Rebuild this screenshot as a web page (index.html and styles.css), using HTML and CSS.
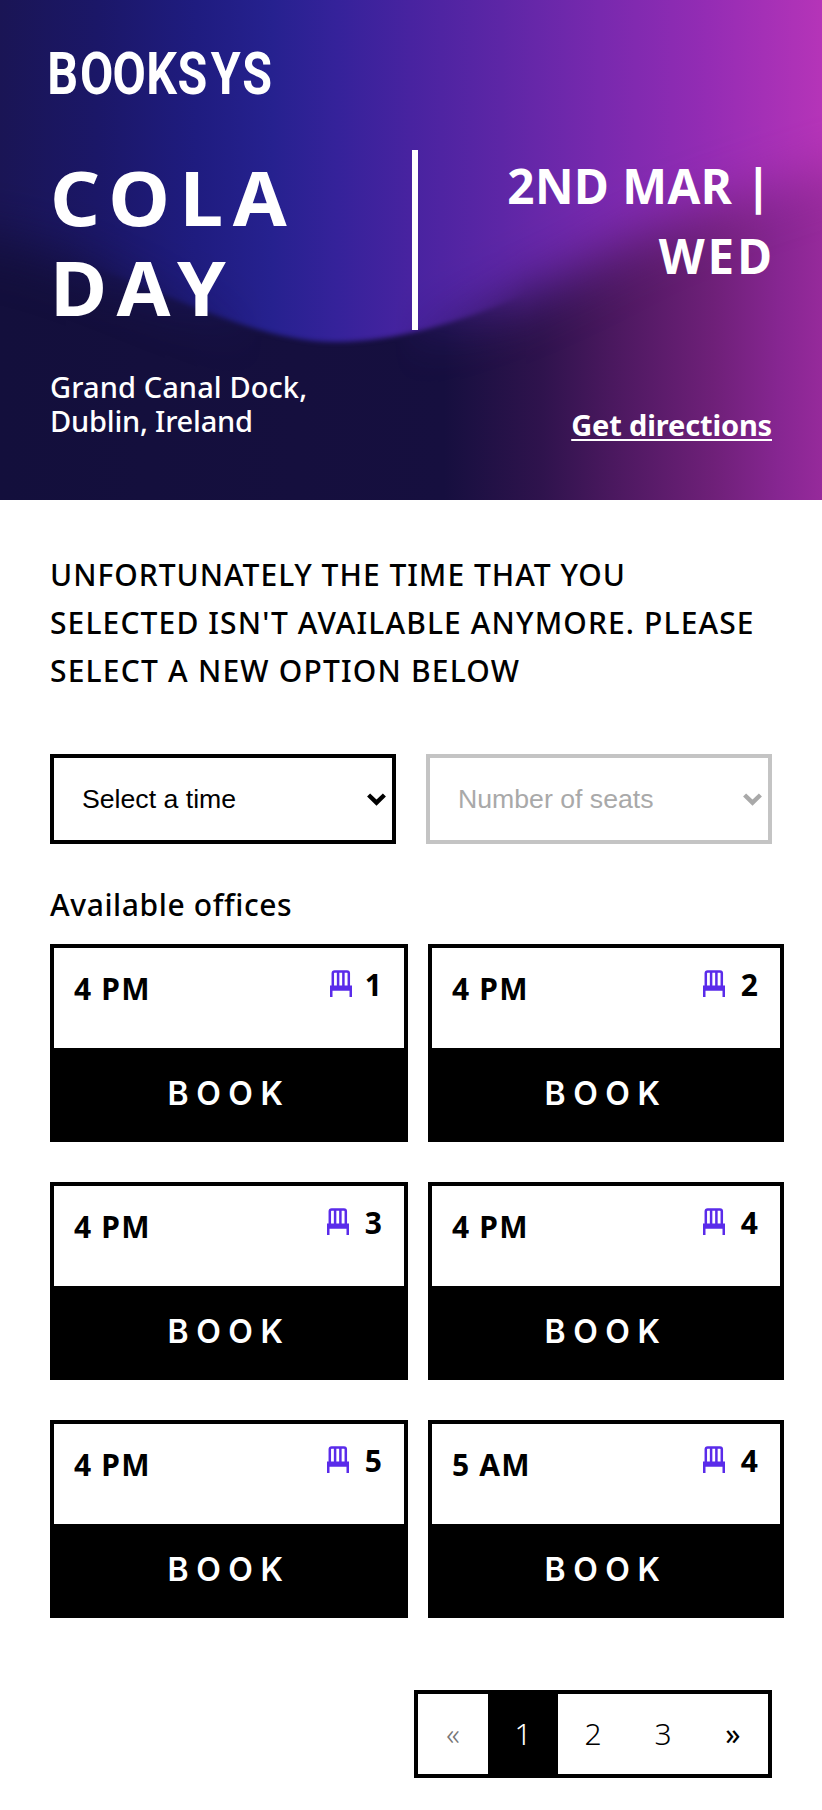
FILE: index.html
```html
<!DOCTYPE html>
<html lang="en">
<head>
<meta charset="utf-8">
<title>Booksys</title>
<link rel="stylesheet" href="styles.css">
</head>
<body>
<svg class="defs" aria-hidden="true">
  <symbol id="chair" viewBox="0 0 22 27">
    <path d="M2.8 17V3.2Q2.8 1.4 4.6 1.4H17Q18.8 1.4 18.8 3.2V17M8.1 2V17M13.4 2V17" fill="none" stroke="#5a2bea" stroke-width="2.5"/>
    <path d="M0 15.6H22V27H19.5V20.8H2.5V27H0Z" fill="#5a2bea"/>
  </symbol>
</svg>
<header class="hero">
  <svg class="hero-bg" viewBox="0 0 822 500" preserveAspectRatio="none" aria-hidden="true">
    <defs>
      <linearGradient id="top" x1="0" x2="1" y1="0" y2="0">
        <stop offset="0" stop-color="#1a1555"/>
        <stop offset=".12" stop-color="#1b1768"/>
        <stop offset=".24" stop-color="#1f1c80"/>
        <stop offset=".33" stop-color="#26218f"/>
        <stop offset=".41" stop-color="#35229a"/>
        <stop offset=".5" stop-color="#4823a0"/>
        <stop offset=".61" stop-color="#5d26a6"/>
        <stop offset=".73" stop-color="#7829ae"/>
        <stop offset=".86" stop-color="#942cb4"/>
        <stop offset="1" stop-color="#b534b8"/>
      </linearGradient>
      <linearGradient id="base" x1="0" x2="1" y1="0" y2="0">
        <stop offset="0" stop-color="#130f3c"/>
        <stop offset=".54" stop-color="#160f3f"/>
        <stop offset=".66" stop-color="#2f134d"/>
        <stop offset=".76" stop-color="#4f1962"/>
        <stop offset=".87" stop-color="#6f2079"/>
        <stop offset=".95" stop-color="#872692"/>
        <stop offset="1" stop-color="#962a9b"/>
      </linearGradient>
      <linearGradient id="focus" gradientUnits="userSpaceOnUse" x1="0" x2="822" y1="0" y2="0">
        <stop offset=".08" stop-color="#000"/>
        <stop offset=".32" stop-color="#fff"/>
        <stop offset=".48" stop-color="#fff"/>
        <stop offset=".64" stop-color="#000"/>
      </linearGradient>
      <filter id="soft" x="-20%" y="-20%" width="140%" height="140%"><feGaussianBlur stdDeviation="26"/></filter>
      <filter id="crisp"><feGaussianBlur stdDeviation="2.5"/></filter>
      <mask id="focusMask" maskUnits="userSpaceOnUse" x="0" y="0" width="822" height="500"><rect width="822" height="500" fill="url(#focus)"/></mask>
      <mask id="wave" maskUnits="userSpaceOnUse" x="0" y="0" width="822" height="500">
        <rect width="822" height="500" fill="#000"/>
        <path filter="url(#soft)" fill="#fff" d="M-100-100H940V135C800 180 700 207 620 248C540 292 430 342 336 342C236 342 125 265 0 240L-100 225Z"/>
        <g mask="url(#focusMask)">
          <rect width="822" height="500" fill="#000"/>
          <path filter="url(#crisp)" fill="#fff" d="M-100-100H940V135C800 180 700 207 620 248C540 292 430 342 336 342C236 342 125 265 0 240L-100 225Z"/>
        </g>
      </mask>
    </defs>
    <rect width="822" height="500" fill="url(#base)"/>
    <rect width="822" height="500" fill="url(#top)" mask="url(#wave)"/>
  </svg>
  <div class="hero-content">
    <svg class="logo" width="224" height="100" viewBox="0 0 224 100"><text transform="scale(.82 1)" x="-3.5 36.5 76.3 117.3 155.5 196 234.5" y="44">BOOKSYS</text></svg>
    <div class="event">
      <h1 class="title">COLA<br><span class="title-day">DAY</span></h1>
      <div class="divider"></div>
      <p class="date">2ND MAR |<br><span class="weekday">WED</span></p>
    </div>
    <div class="place">
      <p class="address">Grand Canal Dock,<br><span class="city">Dublin, Ireland</span></p>
      <a class="directions">Get directions</a>
    </div>
  </div>
</header>
<main class="content">
  <p class="notice"><span class="n1">UNFORTUNATELY THE TIME THAT YOU</span><br><span class="n2">SELECTED ISN'T AVAILABLE ANYMORE. PLEASE</span><br><span class="n3">SELECT A NEW OPTION BELOW</span></p>
  <div class="filters">
    <div class="select"><span>Select a time</span><svg width="19" height="13" viewBox="0 0 19 13"><path d="M1.6 2L9.5 9.6L17.4 2" fill="none" stroke="currentColor" stroke-width="4.4"/></svg></div>
    <div class="select disabled"><span>Number of seats</span><svg width="19" height="13" viewBox="0 0 19 13"><path d="M1.6 2L9.5 9.6L17.4 2" fill="none" stroke="currentColor" stroke-width="4.4"/></svg></div>
  </div>
  <h2 class="heading">Available offices</h2>
  <div class="offices">
    <article class="card"><div class="info"><span class="time">4 PM</span><span class="seats"><svg class="chair"><use href="#chair"/></svg><b class="one">1</b></span></div><div class="book">BOOK</div></article>
    <article class="card"><div class="info"><span class="time">4 PM</span><span class="seats"><svg class="chair"><use href="#chair"/></svg><b>2</b></span></div><div class="book">BOOK</div></article>
    <article class="card"><div class="info"><span class="time">4 PM</span><span class="seats"><svg class="chair"><use href="#chair"/></svg><b>3</b></span></div><div class="book">BOOK</div></article>
    <article class="card"><div class="info"><span class="time">4 PM</span><span class="seats"><svg class="chair"><use href="#chair"/></svg><b>4</b></span></div><div class="book">BOOK</div></article>
    <article class="card"><div class="info"><span class="time">4 PM</span><span class="seats"><svg class="chair"><use href="#chair"/></svg><b>5</b></span></div><div class="book">BOOK</div></article>
    <article class="card"><div class="info"><span class="time">5 AM</span><span class="seats"><svg class="chair"><use href="#chair"/></svg><b>4</b></span></div><div class="book">BOOK</div></article>
  </div>
  <nav class="pages"><span class="off">«</span><span class="current">1</span><span>2</span><span>3</span><span class="next">»</span></nav>
</main>
</body>
</html>
```
FILE: styles.css
```css
* { box-sizing: border-box; }
body { margin: 0; background: #fff; color: #000; font-family: "Noto Sans", sans-serif; }
h1, h2, p { margin: 0; }
.defs { display: none; }

.hero { position: relative; height: 500px; color: #fff; overflow: hidden; }
.hero-bg { position: absolute; inset: 0; width: 100%; height: 100%; }
.hero-content { position: relative; padding: 50px 50px 0; }
.logo { display: block; overflow: visible; }
.logo text { font: 700 59px Roboto, sans-serif; fill: #fff; }
.event { display: grid; grid-template-columns: 362px 6px 1fr; grid-template-rows: 180px; }
.title { padding-top: 2px; font-weight: 700; font-size: 75px; line-height: 90px; letter-spacing: 9.3px; white-space: nowrap; transform: scaleX(1.04); transform-origin: 0 0; }
.title-day { letter-spacing: 10.6px; }
.divider { background: #fff; }
.date { padding-top: 1px; text-align: right; font-size: 47.5px; line-height: 70px; font-weight: 700; letter-spacing: .5px; }
.weekday { margin-right: -3px; letter-spacing: 3px; }
.place { display: flex; justify-content: space-between; align-items: flex-end; height: 72px; margin-top: 40px; }
.address { align-self: flex-start; font-size: 29px; line-height: 34px; font-weight: 500; letter-spacing: .1px; }
.city { letter-spacing: -.2px; }
.directions { font-size: 29px; line-height: 34px; font-weight: 700; letter-spacing: -.15px; text-decoration: underline; text-decoration-thickness: 2px; text-underline-offset: 3px; }

.content { padding: 51px 50px 32px; }
.notice { height: 203px; font-size: 30px; line-height: 48px; font-weight: 500; white-space: nowrap; }
.n1 { letter-spacing: 1px; }
.n2 { letter-spacing: 1.12px; }
.n3 { letter-spacing: 1.2px; }
.filters { display: grid; grid-template-columns: 1fr 1fr; gap: 30px; }
.select { display: flex; align-items: center; justify-content: space-between; height: 90px; padding: 0 6px 0 28px; border: 4px solid #000; font: 26.67px "Liberation Sans", sans-serif; }
.select.disabled { border-color: #c4c4c4; color: #a9a9a9; }
.heading { margin: 36px 0 14px; font-size: 30px; line-height: 50px; font-weight: 500; letter-spacing: .6px; }
.offices { display: grid; grid-template-columns: 358px 356px; gap: 40px 20px; }
.card { height: 198px; border: 4px solid #000; background: #000; }
.info { display: flex; justify-content: space-between; height: 100px; padding: 17px 22px 0 20px; background: #fff; font-size: 30px; line-height: 40px; font-weight: 700; }
.time { padding-top: 4px; letter-spacing: 1.2px; }
.seats { display: flex; }
.seats b { font-weight: 700; }
.seats .one { margin-left: -3px; }
.chair { width: 22px; height: 27px; margin: 5px 16px 0 0; }
.book { height: 90px; text-align: center; color: #fff; font: 600 32px/91px Inter, sans-serif; letter-spacing: 7.5px; }
.pages { display: flex; width: 358px; height: 88px; margin: 72px 0 0 auto; border: 4px solid #000; font-size: 30px; font-weight: 300; line-height: 80px; text-align: center; }
.pages span { width: 70px; }
.pages .current { background: #000; color: #fff; }
.pages .off { color: #777; }
.pages .next { font-weight: 400; }
```
